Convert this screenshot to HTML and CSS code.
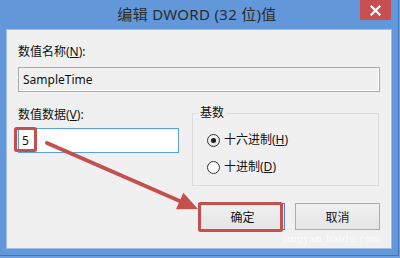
FILE: index.html
```html
<!DOCTYPE html>
<html lang="zh-CN">
<head>
<meta charset="utf-8">
<title>编辑 DWORD (32 位)值</title>
<link rel="stylesheet" href="styles.css">
</head>
<body>
<div class="window">
  <div class="titlebar">
    <span class="title">编辑 DWORD (32 位)值</span>
    <button class="close" aria-label="关闭">
      <svg width="11" height="11" viewBox="0 0 11 11"><path d="M1.5 1.5 L9.5 9.5 M9.5 1.5 L1.5 9.5" stroke="#fff" stroke-width="2.2" stroke-linecap="square"/></svg>
    </button>
  </div>
  <div class="client">
    <div class="label first">数值名称(<u>N</u>):</div>
    <div class="textbox readonly">SampleTime</div>
    <div class="row">
      <div class="col">
        <div class="label second">数值数据(<u>V</u>):</div>
        <div class="textbox focused">5</div>
      </div>
      <fieldset class="group">
        <legend>基数</legend>
        <div class="radio-row first-radio"><span class="radio checked"></span><span>十六进制(<u>H</u>)</span></div>
        <div class="radio-row"><span class="radio"></span><span>十进制(<u>D</u>)</span></div>
      </fieldset>
    </div>
    <div class="buttons">
      <button class="btn default">确定</button>
      <button class="btn">取消</button>
    </div>
  </div>
  <div class="watermark">jingyan.baidu.com</div>
  <svg class="overlay" width="400" height="258" viewBox="0 0 400 258">
    <g fill="none" stroke="#c4504d" stroke-width="3">
      <rect x="15.5" y="128.5" width="20" height="22" rx="1"/>
      <rect x="199.5" y="203.5" width="82" height="27" rx="1"/>
    </g>
    <line x1="47" y1="143" x2="182" y2="202" stroke="#c4504d" stroke-width="4" stroke-linecap="round"/>
    <polygon points="198,209 176,209.2 183.3,192.8" fill="#c4504d"/>
  </svg>
</div>
</body>
</html>
```

FILE: styles.css
```css
html, body {
  margin: 0;
  padding: 0;
}
body {
  width: 400px;
  height: 258px;
  overflow: hidden;
  background: #6d9fe0;
  font-family: "Noto Sans", "Noto Sans CJK SC", sans-serif;
}
.window {
  position: relative;
  box-sizing: border-box;
  width: 399px;
  height: 256px;
  background: #6297da;
  border-right: 1px solid #4676ba;
  border-bottom: 1px solid #4676ba;
  padding: 0 6px 6px 6px;
  display: flex;
  flex-direction: column;
}
.titlebar {
  position: relative;
  height: 29px;
  display: flex;
  justify-content: center;
  align-items: flex-start;
}
.title {
  font-size: 15px;
  line-height: 29px;
  color: #2b2b2b;
  letter-spacing: 0.3px;
  margin-left: -4px;
}
.close {
  position: absolute;
  top: 0;
  right: 1px;
  width: 31px;
  height: 20px;
  border: 0;
  padding: 0;
  background: #c74f4f;
  display: flex;
  align-items: center;
  justify-content: center;
}
.client {
  box-sizing: border-box;
  width: 386px;
  height: 220px;
  background: #f0f0f0;
  border: 1px solid #9ebee9;
  padding: 14px 11px 0 11px;
  display: flex;
  flex-direction: column;
}
.label {
  font-size: 12px;
  line-height: 16px;
  color: #111;
}
.label.first {
  margin-bottom: 7px;
}
.label.second {
  margin-bottom: 5px;
}
.textbox {
  box-sizing: border-box;
  height: 25px;
  font-size: 12px;
  line-height: 23px;
  padding-left: 4px;
  color: #111;
}
.textbox.readonly {
  width: 362px;
  background: #f0f0f0;
  border: 1px solid #acacac;
  box-shadow: inset -1px -1px 0 #fff;
}
.textbox.focused {
  width: 161px;
  background: #fff;
  border: 1px solid #5a9fe6;
  padding-left: 3px;
}
.row {
  margin-top: 15px;
  display: grid;
  grid-template-columns: 161px 187px;
  column-gap: 13px;
}
.group {
  margin: 0;
  padding: 0 0 10px 14px;
  border: 1px solid #dcdcdc;
  min-width: 0;
}
.group legend {
  font-size: 12px;
  line-height: 12px;
  padding: 0 2px;
  margin-left: -9px;
  color: #111;
}
.radio-row {
  display: flex;
  align-items: center;
  gap: 4px;
  height: 16px;
  font-size: 12px;
  line-height: 16px;
  color: #111;
  margin-top: 11px;
}
.radio-row.first-radio {
  margin-top: 13px;
}
.radio {
  box-sizing: border-box;
  width: 13px;
  height: 13px;
  border: 1px solid #333;
  border-radius: 50%;
  background: #fff;
  display: flex;
  align-items: center;
  justify-content: center;
}
.radio.checked {
  background: linear-gradient(#f4f4f4, #e4e4e4);
}
.radio.checked::after {
  content: "";
  width: 5px;
  height: 5px;
  border-radius: 50%;
  background: #1a1a1a;
}
.buttons {
  margin-top: 17px;
  display: flex;
  justify-content: flex-end;
  gap: 10px;
}
.btn {
  box-sizing: border-box;
  width: 85px;
  height: 27px;
  border: 1px solid #acacac;
  background: linear-gradient(#f0f0f0, #e5e5e5);
  font-family: "Noto Sans CJK SC", sans-serif;
  font-size: 12px;
  color: #111;
  padding: 0;
}
.btn.default {
  border-color: #5a7fd0;
}
.watermark {
  position: absolute;
  left: 283px;
  top: 233px;
  font-family: "DejaVu Serif", serif;
  font-size: 10px;
  color: rgba(255, 255, 255, 0.75);
  letter-spacing: 0.3px;
}
.overlay {
  position: absolute;
  left: 0;
  top: 0;
  pointer-events: none;
}
```
